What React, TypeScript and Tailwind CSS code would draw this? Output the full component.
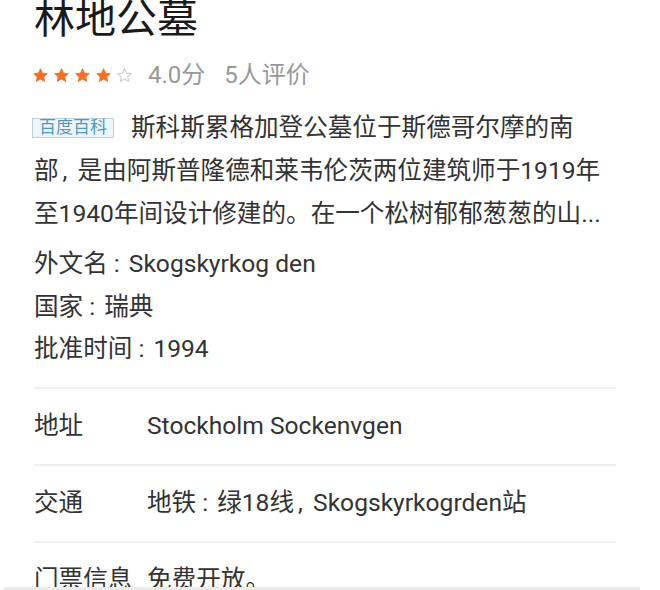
const font = { fontFamily: 'Roboto, "Noto Sans CJK SC", sans-serif' };

function Star({ filled }: { filled: boolean }) {
  return (
    <svg width="17" height="17" viewBox="0 0 24 24">
      <path
        d="M12 2.5l2.9 6.2 6.6.7-4.9 4.5 1.4 6.6L12 17.1l-6 3.4 1.4-6.6-4.9-4.5 6.6-.7z"
        fill={filled ? '#f36f21' : 'none'}
        stroke={filled ? '#f36f21' : '#cfcfcf'}
        strokeWidth={filled ? 1.2 : 1.6}
        strokeLinejoin="round"
      />
    </svg>
  );
}

// Narrow punctuation, as the source device renders it
function Colon() {
  return <span className="inline-block w-[21px] pl-[6px]">:</span>;
}
function Comma() {
  return <span className="inline-block w-[19px] pl-[4px]">,</span>;
}

const facts = [
  { k: '外文名', v: 'Skogskyrkog den' },
  { k: '国家', v: '瑞典' },
  { k: '批准时间', v: '1994' },
];

export default function App() {
  return (
    <div className="w-[660px] h-[590px] overflow-hidden bg-white relative" style={font}>
      <div className="pl-[34px] pr-[44px] -mt-[6px]">
        {/* ===== TITLE ===== */}
        <h1 className="text-[41px] leading-[50px] text-[#1a1a1a]">林地公墓</h1>

        {/* ===== RATING ===== */}
        <div className="mt-[16px] h-[30px] flex items-center">
          <div className="flex items-center gap-[4px] -ml-[2px]">
            {[0, 1, 2, 3, 4].map((i) => (
              <Star key={i} filled={i < 4} />
            ))}
          </div>
          <span className="ml-[15px] text-[24px] text-[#999]">4.0分</span>
          <span className="ml-[19px] text-[24px] text-[#999]">5人评价</span>
        </div>

        {/* ===== SUMMARY ===== */}
        <p className="mt-[16px] pr-[6px] text-[24.6px] leading-[43px] text-[#333]">
          <span className="inline-block align-[3px] mr-[17px] -ml-[2px] w-[82px] text-center h-[20px] leading-[17px] text-[17px] text-[#4f9ac2] bg-[#eef6fa] border border-[#b9d3e2]">
            百度百科
          </span>
          斯科斯累格加登公墓位于斯德哥尔摩的南
          <span className="whitespace-nowrap">
            部<Comma />
          </span>
          是由阿斯普隆德和莱韦伦茨两位建筑师于1919年至1940年间设计修建的。在一个松树郁郁葱葱的山...
        </p>

        <div className="mt-[8px] text-[24.6px] leading-[42.5px] text-[#333]">
          {facts.map((f) => (
            <div key={f.k}>
              {f.k}
              <Colon />
              {f.v}
            </div>
          ))}
        </div>

        {/* ===== INFO ROWS ===== */}
        <div className="mt-[16px] text-[24.6px] text-[#333]">
          <div className="h-[2px] bg-[#efefef]" />
          <div className="h-[75px] flex items-center">
            <span className="w-[113px] shrink-0">地址</span>
            <span>Stockholm Sockenvgen</span>
          </div>
          <div className="h-[2px] bg-[#efefef]" />
          <div className="h-[75px] flex items-center">
            <span className="w-[113px] shrink-0">交通</span>
            <span>
              地铁<Colon />绿18线<Comma />Skogskyrkogrden站
            </span>
          </div>
          <div className="h-[2px] bg-[#efefef]" />
          <div className="h-[75px] flex items-center">
            <span className="w-[113px] shrink-0">门票信息</span>
            <span>免费开放。</span>
          </div>
        </div>
      </div>
      <div className="absolute left-[4px] right-[20px] bottom-0 h-[3px] bg-[#ececec]" />
    </div>
  );
}
